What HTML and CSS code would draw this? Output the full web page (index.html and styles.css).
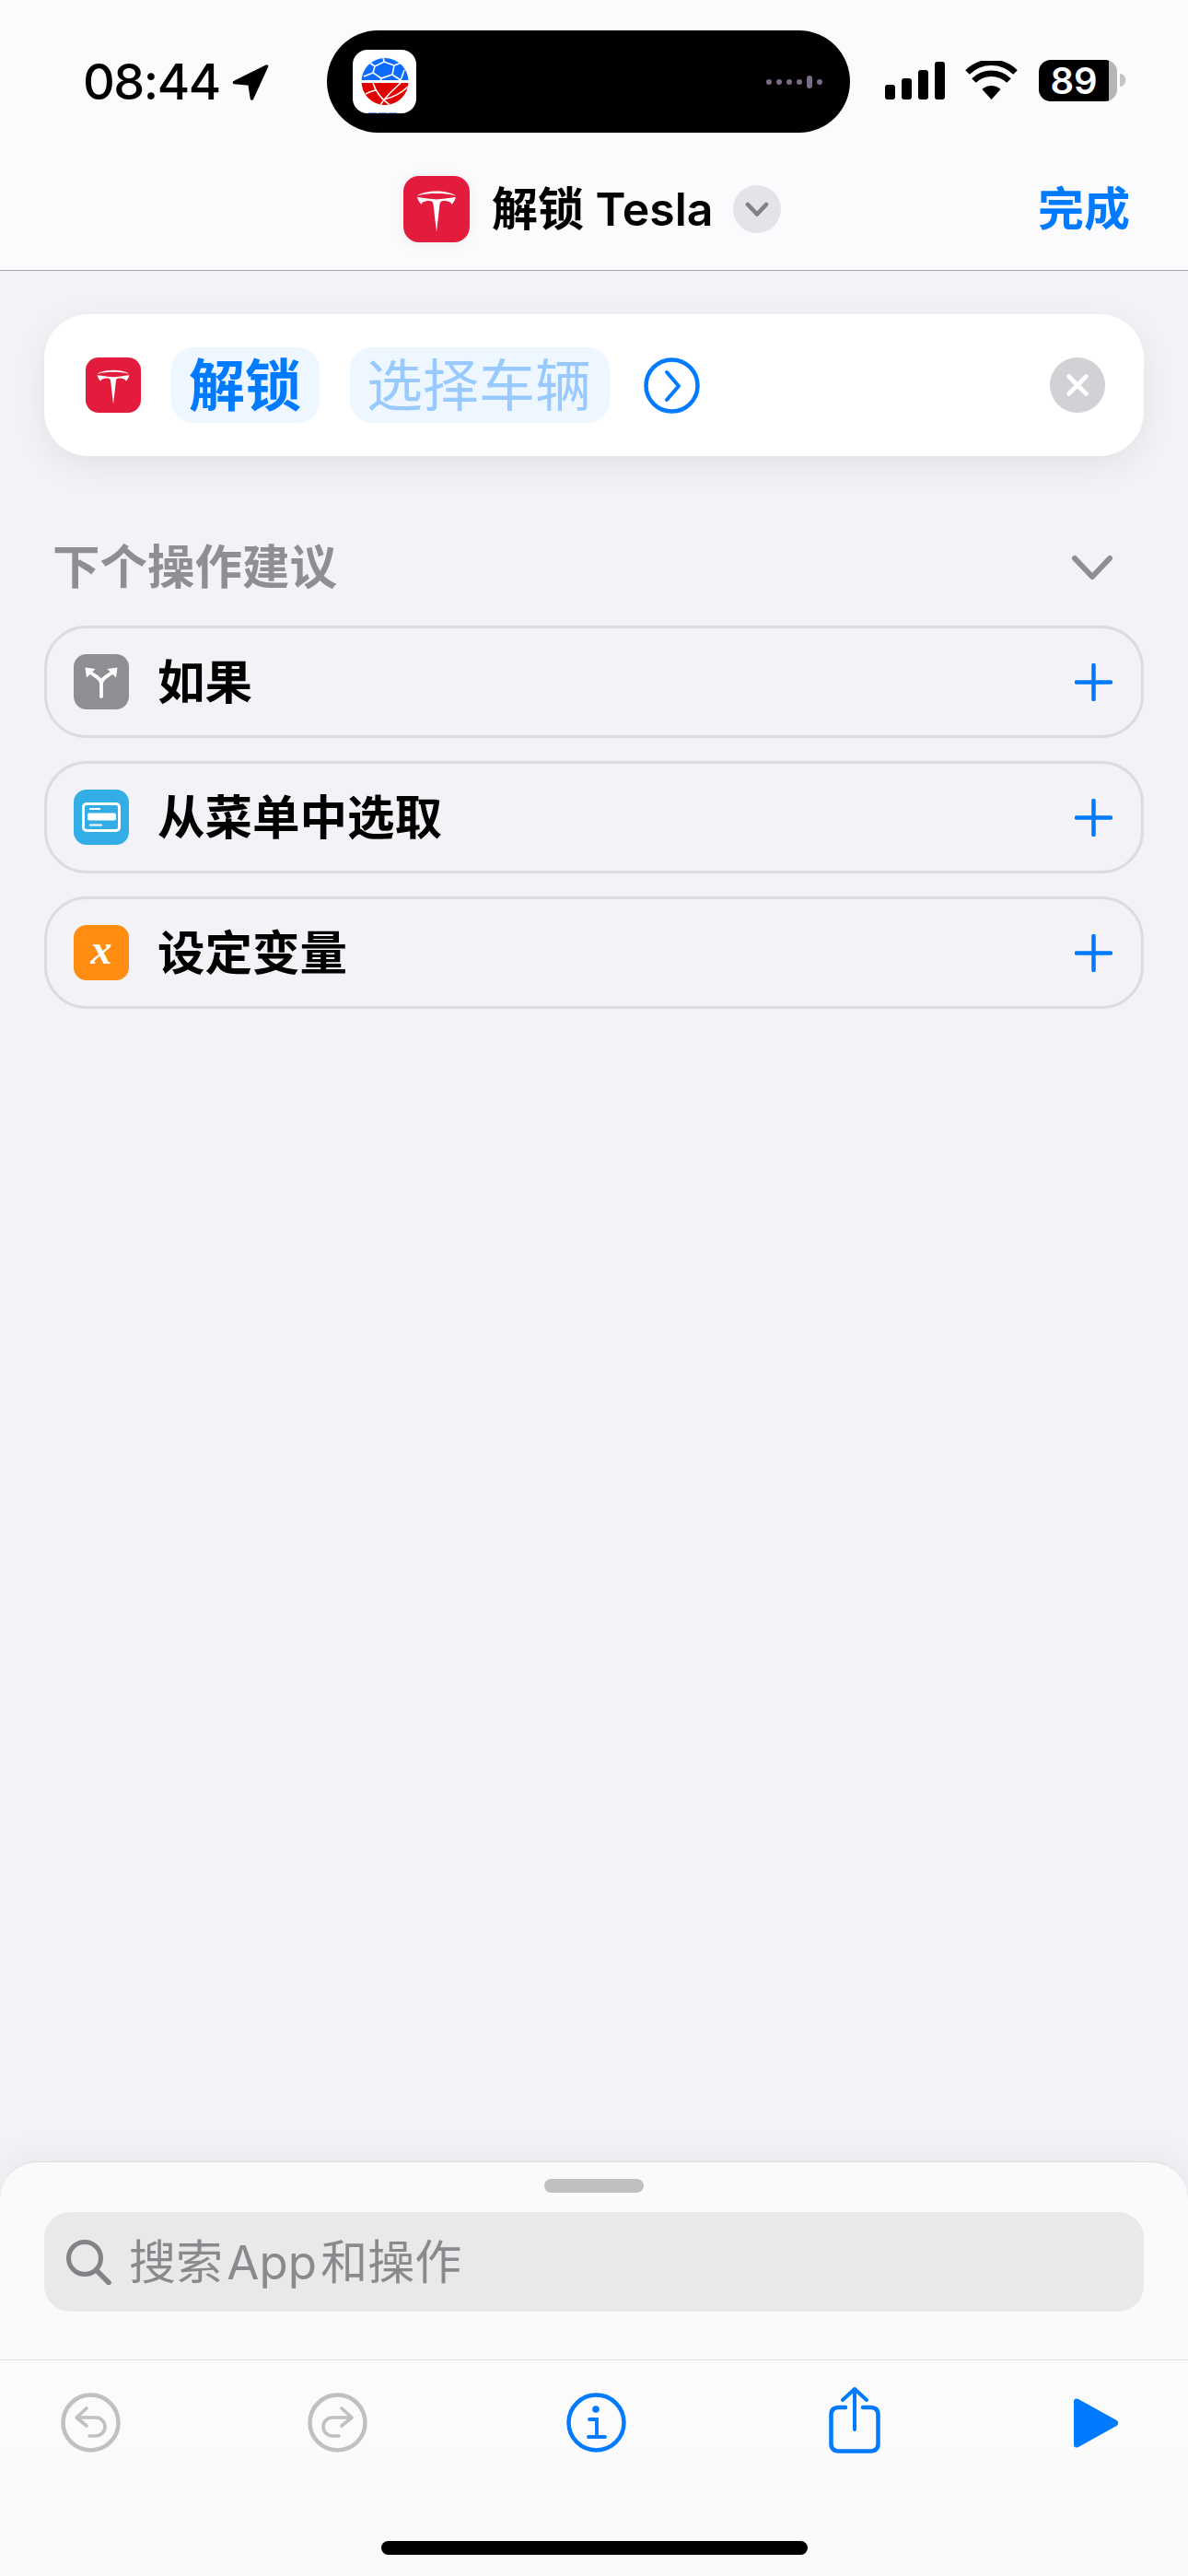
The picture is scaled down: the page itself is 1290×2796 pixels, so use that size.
FILE: index.html
```html
<!DOCTYPE html>
<html lang="zh-CN">
<head>
    <meta charset="UTF-8">
    <meta name="viewport" content="width=device-width, initial-scale=1.0">
    <title>解锁 Tesla</title>
    <link rel="stylesheet" href="styles.css">
</head>
<body>
    <svg class="defs" width="0" height="0">
        <symbol id="tesla" viewBox="0 0 72 72">
            <path d="M14.5 21.5 C20 18 28 16.5 36 16.5 C44 16.5 52 18 57.5 21.5 C50 19.5 43 19 36 19 C29 19 22 19.5 14.5 21.5Z" fill="#fff"/>
            <path d="M15 23 C23 24 30 25 36 25.5 C42 25 49 24 57 23 C56 26 54.5 29 52.5 31 C52 28 48 27 44 27 C41 27 40 28 39.6 30 L36 61 L32.4 30 C32 28 31 27 28 27 C24 27 20 28 19.5 31 C17.5 29 16 26 15 23Z" fill="#fff"/>
        </symbol>
        <symbol id="plus" viewBox="0 0 41 41">
            <path d="M20.5 2 V39 M2 20.5 H39" fill="none" stroke="#007aff" stroke-width="4.5" stroke-linecap="round"/>
        </symbol>
        <symbol id="undo" viewBox="0 0 65 65">
            <circle cx="32.5" cy="32.5" r="30" fill="none" stroke="#c0c0c0" stroke-width="4.5"/>
            <path d="M28 17 L17 27 L28 36 M17 27 H38 A10 10 0 0 1 38 47 H31" fill="none" stroke="#c0c0c0" stroke-width="3.6" stroke-linecap="round" stroke-linejoin="round"/>
        </symbol>
    </svg>

    <header class="top-bar">
        <div class="status-bar">
            <span class="time">08:44</span>
            <svg class="location" width="40" height="40" viewBox="0 0 40 40">
                <path d="M37.5 3 L2.5 20.5 L19 22 L21.5 38 Z" stroke="#000" stroke-width="3.5" stroke-linejoin="round"/>
            </svg>
            <div class="island">
                <svg class="island-app" width="69" height="69" viewBox="0 0 69 69">
                    <defs>
                        <clipPath id="ball"><circle cx="35" cy="34.5" r="25.5"/></clipPath>
                    </defs>
                    <rect width="69" height="69" rx="16" fill="#fff"/>
                    <path d="M17 68.5 H50" stroke="#6aa5ff" stroke-width="1" stroke-dasharray="9 2"/>
                    <g clip-path="url(#ball)">
                        <rect x="9" y="9" width="52" height="24" fill="#0b6cff"/>
                        <rect x="9" y="36" width="52" height="24" fill="#e00000"/>
                        <g fill="none" stroke="#fff" stroke-width="1.6">
                            <path d="M24 18 L34 13 L45 17 L43 27 L31 31 L22 25 Z"/>
                            <path d="M34 13 L33 8 M45 17 L53 14 M43 27 L52 33 M31 31 L30 35 M22 25 L12 29 M24 18 L17 13 M52 33 L56 22"/>
                            <path d="M22 36 C25 46 31 54 42 61 M30 60 C36 50 46 42 52 36 M34 54 C42 52 52 48 60 40 M14 48 C18 46 22 44 26 44"/>
                        </g>
                    </g>
                </svg>
                <div class="dots">
                    <span class="dot"></span>
                    <span class="dot"></span>
                    <span class="dot"></span>
                    <span class="dot"></span>
                    <span class="dot dot-tall"></span>
                    <span class="dot"></span>
                </div>
            </div>
            <div class="status-icons">
                <svg class="signal" width="65" height="41" viewBox="0 0 65 41">
                    <rect x="0" y="25" width="11" height="16" rx="3"/>
                    <rect x="18" y="18" width="11" height="23" rx="3"/>
                    <rect x="36" y="9" width="11" height="32" rx="3"/>
                    <rect x="54" y="0" width="11" height="41" rx="3"/>
                </svg>
                <svg class="wifi" width="57" height="42" viewBox="0 0 57 42">
                    <path d="M28.5 42 L18.5 31 A14.5 14.5 0 0 1 38.5 31 Z"/>
                    <path d="M9.5 21.5 A27 27 0 0 1 47.5 21.5" fill="none" stroke="#000" stroke-width="6.5"/>
                    <path d="M2.5 12.5 A37 37 0 0 1 54.5 12.5" fill="none" stroke="#000" stroke-width="6.5"/>
                </svg>
                <div class="battery">89</div>
                <span class="battery-nub"></span>
            </div>
        </div>
        <nav class="nav-bar">
            <div class="nav-title">
                <svg class="nav-icon" width="72" height="72"><use href="#tesla"/></svg>
                <span class="title-text">解锁 Tesla</span>
                <span class="title-chevron">
                    <svg width="26" height="18" viewBox="0 0 26 18">
                        <path d="M3 4 L13 14.5 L23 4" fill="none" stroke="#808085" stroke-width="4.6" stroke-linecap="round" stroke-linejoin="round"/>
                    </svg>
                </span>
            </div>
            <a class="done">完成</a>
        </nav>
    </header>

    <main class="content">
        <section class="action-card">
            <svg class="action-icon" width="60" height="60"><use href="#tesla"/></svg>
            <span class="pill pill-verb">解锁</span>
            <span class="pill pill-param">选择车辆</span>
            <svg class="more" width="61" height="61" viewBox="0 0 61 61">
                <circle cx="30.5" cy="30.5" r="28" fill="none" stroke="#007aff" stroke-width="4.5"/>
                <path d="M25 16 L38 31 L25 46" fill="none" stroke="#007aff" stroke-width="4" stroke-linecap="round" stroke-linejoin="round"/>
            </svg>
            <span class="clear">
                <svg width="26" height="26" viewBox="0 0 26 26">
                    <path d="M3.5 3.5 L22.5 22.5 M22.5 3.5 L3.5 22.5" stroke="#fff" stroke-width="4.6" stroke-linecap="round"/>
                </svg>
            </span>
        </section>

        <div class="suggest-head">
            <h3>下个操作建议</h3>
            <svg width="48" height="30" viewBox="0 0 48 30">
                <path d="M5 5 L24 25 L43 5" fill="none" stroke="#8e8e93" stroke-width="6" stroke-linecap="round" stroke-linejoin="round"/>
            </svg>
        </div>

        <div class="suggest-list">
            <div class="suggest-row">
                <span class="row-icon icon-gray">
                    <svg width="60" height="60" viewBox="0 0 60 60">
                        <path d="M30 46 V32 C30 26 23 24 17 19 M30 32 C30 26 37 24 43 19" fill="none" stroke="#fff" stroke-width="3.8" stroke-linecap="round"/>
                        <path d="M12.5 14.5 L23.5 16 L14 25.5 Z M47.5 14.5 L36.5 16 L46 25.5 Z" fill="#fff"/>
                    </svg>
                </span>
                <span class="row-label">如果</span>
                <svg class="row-add" width="41" height="41"><use href="#plus"/></svg>
            </div>
            <div class="suggest-row">
                <span class="row-icon icon-blue">
                    <svg width="42" height="32" viewBox="0 0 42 32">
                        <rect x="1.5" y="1.5" width="39" height="29" rx="3.5" fill="none" stroke="#fff" stroke-width="3"/>
                        <rect x="6" y="11.5" width="31" height="8" rx="2" fill="#fff"/>
                        <path d="M8 7 H20 M8 24.5 H22" stroke="#fff" stroke-width="1.8"/>
                    </svg>
                </span>
                <span class="row-label">从菜单中选取</span>
                <svg class="row-add" width="41" height="41"><use href="#plus"/></svg>
            </div>
            <div class="suggest-row">
                <span class="row-icon icon-orange"><span class="var-x">x</span></span>
                <span class="row-label">设定变量</span>
                <svg class="row-add" width="41" height="41"><use href="#plus"/></svg>
            </div>
        </div>
    </main>

    <footer class="sheet">
        <div class="grabber"></div>
        <div class="search">
            <svg width="49" height="49" viewBox="0 0 49 49">
                <circle cx="20" cy="20" r="17.5" fill="none" stroke="#838387" stroke-width="5"/>
                <path d="M32.5 33 L46 46.5" stroke="#838387" stroke-width="5.5" stroke-linecap="round"/>
            </svg>
            <span class="search-text">搜索 App 和操作</span>
        </div>
        <div class="toolbar">
            <svg class="tool-undo" width="65" height="65"><use href="#undo"/></svg>
            <svg class="tool-redo" width="65" height="65"><use href="#undo"/></svg>
            <svg class="tool-info" width="65" height="65" viewBox="0 0 65 65">
                <circle cx="32.5" cy="32.5" r="30" fill="none" stroke="#007aff" stroke-width="4.5"/>
                <circle cx="32" cy="18" r="3.8" fill="#007aff"/>
                <path d="M25 29 H33 V48 M24 48 H42" fill="none" stroke="#007aff" stroke-width="3.8" stroke-linecap="round"/>
            </svg>
            <svg class="tool-share" width="56" height="72" viewBox="0 0 56 72">
                <path d="M18 22 H11 Q2.5 22 2.5 30 V61 Q2.5 69.5 11 69.5 H45 Q53.5 69.5 53.5 61 V30 Q53.5 22 45 22 H37" fill="none" stroke="#007aff" stroke-width="4.5" stroke-linecap="round"/>
                <path d="M28 46 V2 M15 14 L28 2 L41 14" fill="none" stroke="#007aff" stroke-width="4" stroke-linecap="round" stroke-linejoin="round"/>
            </svg>
            <svg class="tool-play" width="49" height="54" viewBox="0 0 49 54">
                <path d="M0 4 Q0 -1 5 1 L46.5 24 Q50 27 46.5 30 L5 53 Q0 55 0 50 Z" fill="#007aff"/>
            </svg>
        </div>
        <div class="home-bar"></div>
    </footer>
</body>
</html>
```

FILE: styles.css
```css
* {
    box-sizing: border-box;
}
html, body {
    margin: 0;
    padding: 0;
}
body {
    width: 1290px;
    height: 2796px;
    display: flex;
    flex-direction: column;
    overflow: hidden;
    background-color: #f2f2f7;
    color: #000;
    font-family: Inter, "Noto Sans CJK SC", sans-serif;
}
svg {
    display: block;
    flex-shrink: 0;
}
.defs {
    position: absolute;
}

/* top */
.top-bar {
    height: 294px;
    background-color: #fbfbfd;
    border-bottom: 1px solid #aaaaac;
}
.status-bar {
    height: 111px;
    margin-top: 33px;
    padding-left: 90px;
    display: flex;
    align-items: center;
}
.time {
    width: 146px;
    font-size: 54px;
    font-weight: 500;
    letter-spacing: -1.5px;
    line-height: 1;
    white-space: nowrap;
}
.location {
    margin-left: 16px;
}
.island {
    width: 568px;
    height: 111px;
    margin-left: 63px;
    padding: 0 30px 0 28px;
    display: flex;
    align-items: center;
    justify-content: space-between;
    background-color: #000;
    border-radius: 56px;
}
.dots {
    display: flex;
    align-items: center;
    gap: 5px;
}
.dot {
    width: 6px;
    height: 6px;
    border-radius: 3px;
    background-color: #7a6a85;
}
.dot-tall {
    height: 14px;
}
.status-icons {
    margin: -3px 0 0 38px;
    display: flex;
    align-items: center;
}
.wifi {
    margin-left: 22px;
}
.battery {
    width: 85px;
    height: 45px;
    margin-left: 23px;
    padding-right: 9px;
    display: flex;
    align-items: center;
    justify-content: center;
    border-radius: 13px;
    background: linear-gradient(to right, #000 76px, #b5b5b5 76px);
    color: #fff;
    font-size: 40px;
    font-weight: 600;
}
.battery-nub {
    width: 6px;
    height: 14px;
    margin-left: 3px;
    border-radius: 0 7px 7px 0;
    background-color: #c4c4c4;
}
.nav-bar {
    margin-top: 47px;
    display: grid;
    grid-template-columns: 438px auto 1fr;
    align-items: center;
}
.nav-title {
    grid-column: 2;
    display: flex;
    align-items: center;
}
.nav-icon {
    background-color: #e31b3c;
    border-radius: 17px;
    box-shadow: 0 2px 14px rgba(0, 0, 0, 0.06);
}
.title-text {
    margin: 0 0 0 24px;
    font-size: 50px;
    font-weight: 600;
    line-height: 60px;
    white-space: nowrap;
}
.title-chevron {
    width: 52px;
    height: 52px;
    margin-left: 21px;
    display: flex;
    align-items: center;
    justify-content: center;
    border-radius: 50%;
    background-color: #e4e4e8;
}
.done {
    justify-self: end;
    padding-right: 63px;
    color: #007aff;
    font-size: 50px;
    font-weight: 600;
    line-height: 60px;
}

/* middle */
.content {
    flex: 1;
    padding: 47px 48px 0;
}
.action-card {
    height: 154px;
    padding: 0 42px 0 45px;
    display: flex;
    align-items: center;
    background-color: #fff;
    border-radius: 48px;
    box-shadow: 0 10px 36px rgba(0, 0, 0, 0.07);
}
.action-icon {
    background-color: #e31b3c;
    border-radius: 14px;
}
.pill {
    height: 82px;
    margin-left: 33px;
    display: flex;
    align-items: center;
    padding-bottom: 7px;
    background-color: #eef6ff;
    border-radius: 24px;
    font-size: 61px;
    white-space: nowrap;
}
.pill-verb {
    padding-left: 19px;
    padding-right: 20px;
    color: #007aff;
    font-weight: 600;
}
.pill-param {
    padding-left: 18px;
    padding-right: 20px;
    color: #99caff;
    font-weight: 400;
}
.more {
    margin-left: 37px;
}
.clear {
    width: 60px;
    height: 60px;
    margin-left: auto;
    display: flex;
    align-items: center;
    justify-content: center;
    border-radius: 50%;
    background-color: #d1d1d6;
}
.suggest-head {
    height: 60px;
    margin-top: 90px;
    padding: 0 32px 0 9px;
    display: flex;
    align-items: center;
    justify-content: space-between;
}
.suggest-head h3 {
    margin: 0;
    color: #8e8e93;
    font-size: 51.5px;
    font-weight: 600;
    line-height: 60px;
}
.suggest-head svg {
    margin-top: 2px;
}
.suggest-list {
    margin-top: 34px;
    display: flex;
    flex-direction: column;
    gap: 25px;
}
.suggest-row {
    height: 122px;
    padding: 0 31px 0 29px;
    display: flex;
    align-items: center;
    border: 3px solid #dcdce0;
    border-radius: 46px;
}
.row-icon {
    width: 60px;
    height: 60px;
    display: flex;
    align-items: center;
    justify-content: center;
    border-radius: 14px;
}
.icon-gray {
    background-color: #8e8e93;
}
.icon-blue {
    background-color: #32ade6;
}
.icon-orange {
    background-color: #ff8d11;
}
.var-x {
    color: #fff;
    font-family: "Liberation Serif", serif;
    font-size: 46px;
    font-style: italic;
    font-weight: 700;
    line-height: 1;
    margin-top: -7px;
}
.row-label {
    margin-left: 31px;
    font-size: 51.5px;
    font-weight: 600;
    line-height: 60px;
}
.row-add {
    margin-left: auto;
}

/* bottom */
.sheet {
    height: 450px;
    padding-top: 18px;
    background-color: #fafafa;
    border-top: 1px solid #dedee2;
    border-radius: 40px 40px 0 0;
    box-shadow: 0 -6px 36px rgba(0, 0, 0, 0.05);
}
.grabber {
    width: 108px;
    height: 15px;
    margin: 0 auto;
    border-radius: 8px;
    background-color: #c0c0c2;
}
.search {
    height: 108px;
    margin: 21px 48px 0;
    padding-left: 24px;
    display: flex;
    align-items: center;
    background-color: #e9e9e9;
    border-radius: 28px;
}
.search-text {
    margin: 0 0 7px 19px;
    color: #8a8a8e;
    font-size: 51px;
    font-weight: 400;
    word-spacing: -10px;
    white-space: nowrap;
}
.toolbar {
    height: 102px;
    margin-top: 52px;
    padding: 35px 0 0 66px;
    display: flex;
    align-items: flex-start;
    border-top: 1px solid #e0e0e2;
    background-color: #fbfbfc;
}
.tool-redo {
    margin-left: 203px;
    transform: scaleX(-1);
}
.tool-info {
    margin-left: 216px;
}
.tool-share {
    margin: -6px 0 0 220px;
}
.tool-play {
    margin: 6px 0 0 210px;
}
.home-bar {
    width: 463px;
    height: 15px;
    margin: 95px auto 0;
    border-radius: 8px;
    background-color: #000;
}
```
